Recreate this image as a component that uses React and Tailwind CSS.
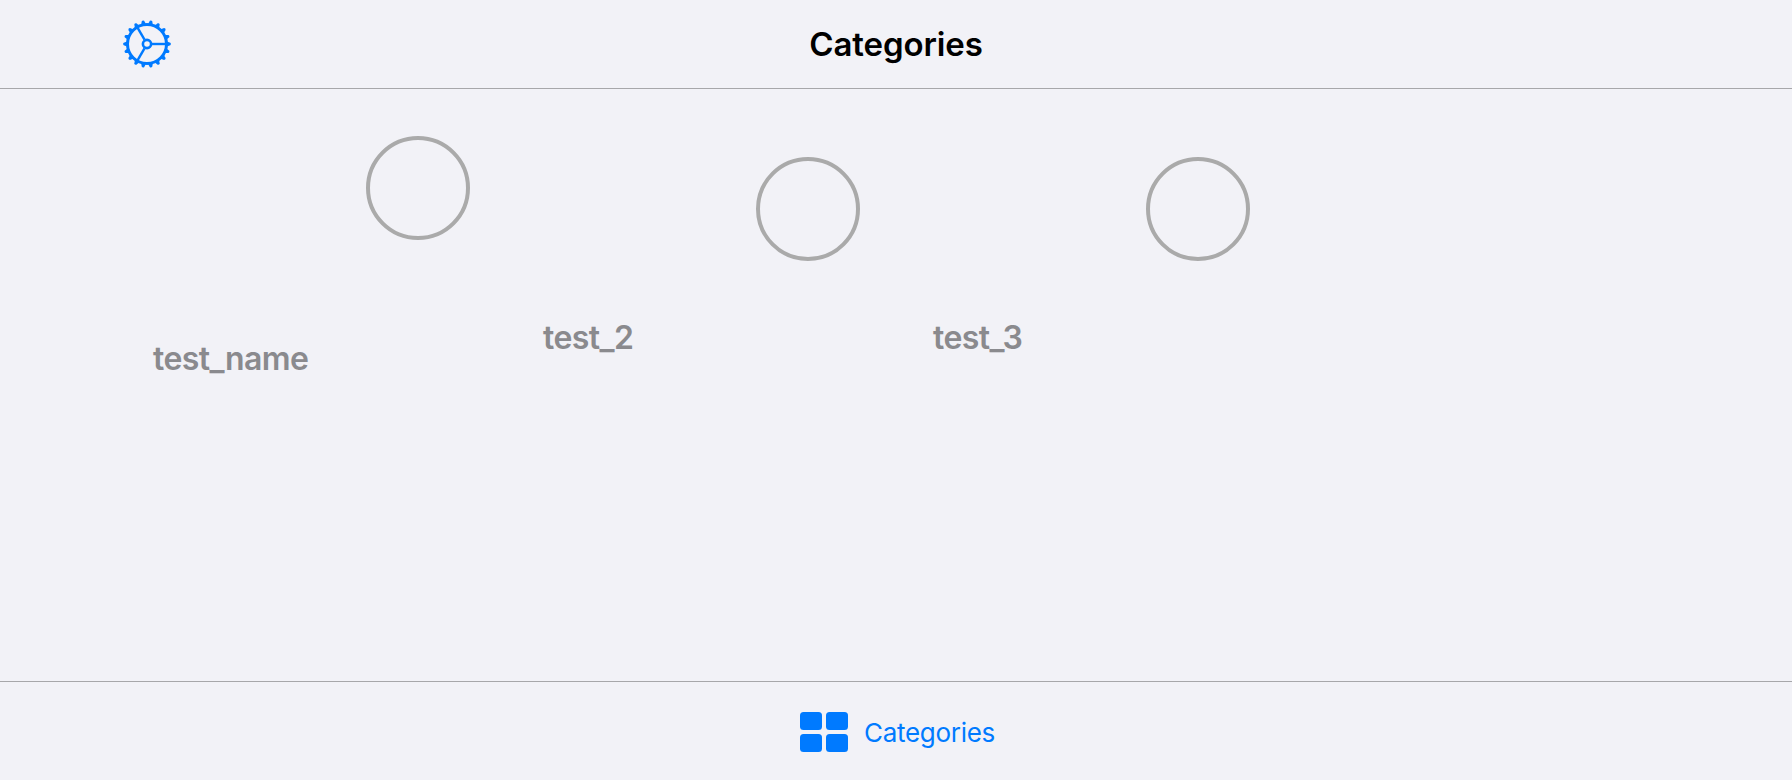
const TEETH = Array.from({ length: 18 }, (_, i) => i * 20);

function GearIcon() {
  return (
    <svg viewBox="-24 -24 48 48" className="size-12 shrink-0 text-[#007aff]" fill="none" stroke="currentColor" aria-label="Settings">
      <circle r="19.5" strokeWidth="3" />
      <circle r="4.1" strokeWidth="2.6" />
      {[0, 120, 240].map((a) => (
        <path key={a} d="M5 0H19" strokeWidth="2.4" transform={`rotate(${a})`} />
      ))}
      {TEETH.map((a) => (
        <path key={a} d="M20 -2.4L23.3 -1.2Q24.5 0 23.3 1.2L20 2.4Z" fill="currentColor" stroke="none" transform={`rotate(${a})`} />
      ))}
    </svg>
  );
}

function GridIcon() {
  return (
    <div className="grid grid-cols-2 gap-1">
      {[0, 1, 2, 3].map((i) => (
        <div key={i} className="h-[18px] w-[22px] rounded-[3.5px] bg-[#007aff]" />
      ))}
    </div>
  );
}

function Category({ name, className, labelClassName }) {
  return (
    <div className={`flex w-[390px] flex-col ${className}`}>
      <div className="ml-[214px] size-[104px] rounded-full border-4 border-[#aaaaaa]" />
      <span className={`ml-px text-[32px] leading-10 font-semibold tracking-[-0.58px] text-[#8a8a8e] ${labelClassName}`}>{name}</span>
    </div>
  );
}

export default function App() {
  return (
    <div className="flex h-[780px] w-full flex-col overflow-hidden bg-[#f2f2f7] font-['Inter',sans-serif]">
      <header className="grid h-[89px] shrink-0 grid-cols-[1fr_auto_1fr] items-center border-b border-[#a7a7aa] pl-[123px]">
        <GearIcon />
        <h1 className="-ml-[123px] text-[33px] leading-[40px] font-semibold tracking-[-0.1px] text-black">Categories</h1>
      </header>
      <main className="flex flex-1 items-start pl-[152px]">
        <Category name="test_name" className="pt-[47px]" labelClassName="mt-[99px]" />
        <Category name="test_2" className="pt-[68px]" labelClassName="mt-[57px]" />
        <Category name="test_3" className="pt-[68px]" labelClassName="mt-[57px]" />
      </main>
      <nav className="flex h-[99px] shrink-0 items-start border-t border-[#a7a7aa] pt-[30px] pl-[800px]">
        <div className="flex items-center">
          <GridIcon />
          <span className="mt-0.5 ml-4 text-[26px] leading-8 tracking-[-0.3px] text-[#007aff]">Categories</span>
        </div>
      </nav>
    </div>
  );
}
